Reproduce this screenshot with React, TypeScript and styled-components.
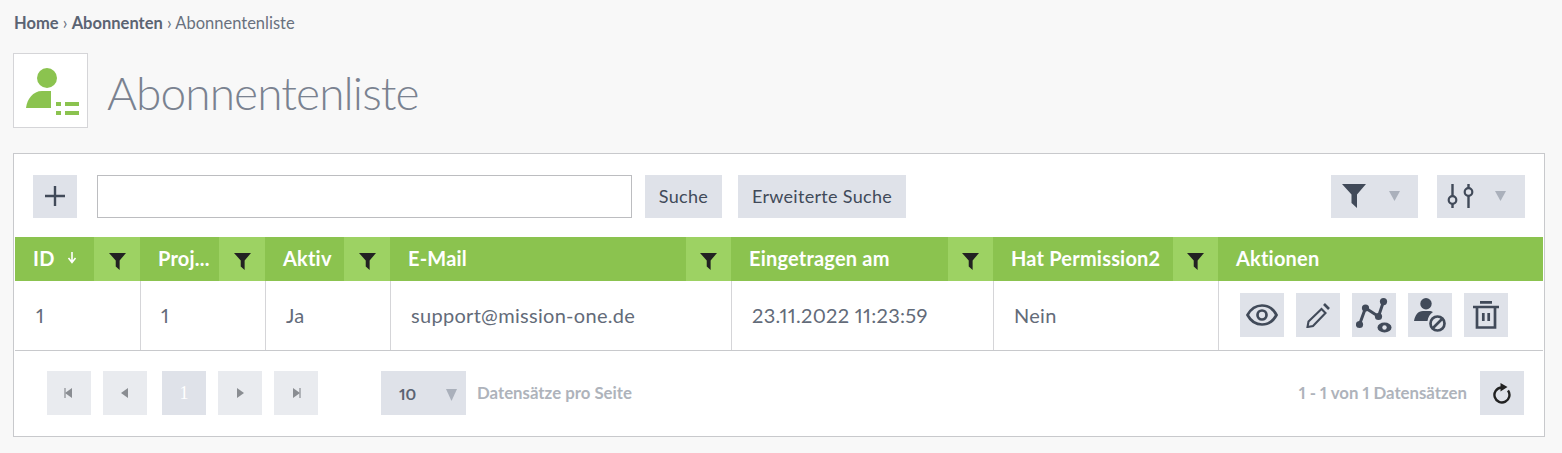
import React from 'react'
import styled, { createGlobalStyle } from 'styled-components'

const columns = [
	{ title: 'ID', head: 79, sort: true, value: '1' },
	{ title: 'Proj...', head: 79, value: '1' },
	{ title: 'Aktiv', head: 79, value: 'Ja' },
	{ title: 'E-Mail', head: 296, value: 'support@mission-one.de' },
	{ title: 'Eingetragen am', head: 217, value: '23.11.2022 11:23:59' },
	{ title: 'Hat Permission2', head: 180, value: 'Nein' },
]

const ink = '#414a59'

const FilterIcon = ({ size = 17, color = '#222' }: { size?: number; color?: string }) => (
	<svg width={size} height={size} viewBox="0 0 24 24">
		<path d="M0 0h24l-9 10.500V24l-5.500-5V10.500z" fill={color} />
	</svg>
)

const Triangle = ({ height = 10 }: { height?: number }) => (
	<svg width="11" height={height} viewBox="0 0 12 10" preserveAspectRatio="none">
		<path d="M0 0h12L6 10z" fill="#aab0bb" />
	</svg>
)

const SubscriberLogo = () => (
	<svg width="53" height="47" viewBox="0 0 53 47">
		<circle cx="21" cy="10" r="10" fill="#8bc34f" />
		<path d="M0 40c1-9 7-17 16-17h9v17z" fill="#8bc34f" />
		<path d="M30 34h5v4h-5zM39 34h14v4H39zM30 43h5v4h-5zM39 43h14v4H39z" fill="#8bc34f" />
	</svg>
)

const ActionIcon = ({ name }: { name: string }) => {
	const stroke = { fill: 'none', stroke: ink, strokeWidth: 2.7 }
	if (name === 'eye')
		return (
			<svg width="32" height="22" viewBox="0 0 32 22">
				<path d="M1.500 11C5 4.500 10 1.500 16 1.500S27 4.500 30.500 11C27 17.500 22 20.500 16 20.500S5 17.500 1.500 11z" {...stroke} />
				<circle cx="16" cy="11" r="4.500" {...stroke} />
			</svg>
		)
	if (name === 'pencil')
		return (
			<svg width="24" height="25" viewBox="0 0 24 25">
				<path d="M15.500 6l4 4L7 23l-5.500 1 1-5.500z" {...stroke} strokeWidth={2.1} />
				<path d="M18 1l5 5" {...stroke} strokeWidth={2.6} />
			</svg>
		)
	if (name === 'path')
		return (
			<svg width="36" height="35" viewBox="0 0 36 35">
				<path d="M3.500 26.500L9.500 10l13 8.500 5-15" {...stroke} strokeWidth={3} />
				<circle cx="3.500" cy="26.500" r="3.600" fill={ink} />
				<circle cx="9.500" cy="10" r="3.600" fill={ink} />
				<circle cx="22.500" cy="18.500" r="3.600" fill={ink} />
				<circle cx="27.500" cy="3.600" r="3.600" fill={ink} />
				<ellipse cx="28.500" cy="29.500" rx="7" ry="5" fill={ink} />
				<circle cx="28.500" cy="29.500" r="2.200" fill="#dfe2e9" />
			</svg>
		)
	if (name === 'block')
		return (
			<svg width="32" height="34" viewBox="0 0 32 34">
				<circle cx="12" cy="5.700" r="5.700" fill={ink} />
				<path d="M0 23c1-6 4-10 9-10h6c2 0 3 .5 4 1-3 2-5 5-5.500 9z" fill={ink} />
				<circle cx="23.500" cy="25.500" r="7" {...stroke} />
				<path d="M18.500 30.500l10-10" {...stroke} />
			</svg>
		)
	return (
		<svg width="26" height="28" viewBox="0 0 26 28">
			<path d="M0 6h26M7 1.300h12" {...stroke} />
			<path d="M4 6v20.500h18V6" {...stroke} />
			<path d="M10.300 12v8M15.700 12v8" {...stroke} />
		</svg>
	)
}

const PagerIcon = ({ flip, bar }: { flip?: boolean; bar?: boolean }) => (
	<svg width="10" height="10" viewBox="0 0 10 10" style={flip ? { transform: 'scaleX(-1)' } : undefined}>
		<path d="M2 0l7 5-7 5z" fill="#8a8d92" />
		{bar && <path d="M8.400 0h1.200v10H8.400z" fill="#8a8d92" />}
	</svg>
)

export default function App() {
	return (
		<Page>
			<GlobalStyle />
			<Breadcrumb>
				<strong>Home</strong> › <strong>Abonnenten</strong> › Abonnentenliste
			</Breadcrumb>
			<TitleRow>
				<LogoBox>
					<SubscriberLogo />
				</LogoBox>
				<Title>Abonnentenliste</Title>
			</TitleRow>
			<Panel>
				<Toolbar>
					<Button $width={44}>
						<svg width="20" height="20" viewBox="0 0 20 20">
							<path d="M10 0v20M0 10h20" stroke={ink} strokeWidth="2.400" />
						</svg>
					</Button>
					<SearchInput />
					<Button $width={77}>Suche</Button>
					<Button $width={168} $gap={16}>
						Erweiterte Suche
					</Button>
					<ToolbarRight>
						<MenuButton $width={87} $inset={11} $between={23}>
							<FilterIcon size={24} color={ink} />
							<Triangle />
						</MenuButton>
						<MenuButton $width={88} $inset={10} $between={21}>
							<svg width="27" height="24" viewBox="0 0 27 24">
								<path d="M5.500 0v12M5.500 20v4M21.500 0v4M21.500 12V24" stroke={ink} strokeWidth="2.400" />
								<circle cx="5.500" cy="16" r="3.800" fill="none" stroke={ink} strokeWidth="2.200" />
								<circle cx="21.500" cy="8" r="3.800" fill="none" stroke={ink} strokeWidth="2.200" />
							</svg>
							<Triangle />
						</MenuButton>
					</ToolbarRight>
				</Toolbar>
				<TableGrid>
					{columns.map((c) => (
						<HeadCell key={c.title}>
							<HeadLabel $width={c.head}>
								{c.title}
								{c.sort && (
									<svg width="10" height="12" viewBox="0 0 10 12">
										<path d="M5 0v9M1.500 6L5 10.500 8.500 6" fill="none" stroke="#fff" strokeWidth="1.600" />
									</svg>
								)}
							</HeadLabel>
							<FilterCell>
								<FilterIcon />
							</FilterCell>
						</HeadCell>
					))}
					<HeadCell>
						<HeadLabel>Aktionen</HeadLabel>
					</HeadCell>
					{columns.map((c, i) => (
						<BodyCell key={c.title} $first={i === 0}>
							{c.value}
						</BodyCell>
					))}
					<ActionsCell>
						{['eye', 'pencil', 'path', 'block', 'trash'].map((name) => (
							<ActionButton key={name}>
								<ActionIcon name={name} />
							</ActionButton>
						))}
					</ActionsCell>
				</TableGrid>
				<Footer>
					<Pager>
						<PageButton>
							<PagerIcon flip bar />
						</PageButton>
						<PageButton>
							<PagerIcon flip />
						</PageButton>
						<CurrentPage>1</CurrentPage>
						<PageButton>
							<PagerIcon />
						</PageButton>
						<PageButton>
							<PagerIcon bar />
						</PageButton>
					</Pager>
					<PageSize>
						10
						<PageSizeArrow>
							<Triangle height={12} />
						</PageSizeArrow>
					</PageSize>
					<FooterText>Datensätze pro Seite</FooterText>
					<FooterRight>
						<FooterText>1 - 1 von 1 Datensätzen</FooterText>
						<RefreshButton $width={44}>
							<svg width="18" height="21" viewBox="0 0 18 21">
								<path d="M8 4.500A7.500 7.500 0 1 0 15 7.500" fill="none" stroke="#222" strokeWidth="2.400" />
								<path d="M7.500 0L14.500 4 7.500 8.500z" fill="#222" />
							</svg>
						</RefreshButton>
					</FooterRight>
				</Footer>
			</Panel>
		</Page>
	)
}

const GlobalStyle = createGlobalStyle`
	html, body {
		margin: 0;
		padding: 0;
		background: #f8f8f8;
	}
	* {
		box-sizing: border-box;
	}
`

const Page = styled.div`
	width: 1562px;
	height: 453px;
	padding: 14px 17px 0 13px;
	overflow: hidden;
	font-family: Lato, 'Noto Sans', sans-serif;
	font-variant-numeric: proportional-nums;
	color: #5b6473;
`

const Breadcrumb = styled.div`
	height: 18px;
	padding-left: 1px;
	font-size: 16.5px;
	line-height: 18px;
	color: #69717e;

	strong {
		font-weight: 700;
		color: #5b6473;
	}
`

const TitleRow = styled.div`
	display: flex;
	align-items: center;
	gap: 19px;
	margin-top: 21px;
`

const LogoBox = styled.div`
	display: flex;
	align-items: center;
	justify-content: center;
	width: 75px;
	height: 75px;
	padding: 1px 0 0 4px;
	background: #fff;
	border: 1px solid #d5d5d8;
`

const Title = styled.h1`
	margin: 0;
	padding-top: 4px;
	font-size: 46px;
	font-weight: 300;
	letter-spacing: -0.9px;
	color: #7a8290;
`

const Panel = styled.div`
	width: 1532px;
	height: 284px;
	margin-top: 25px;
	background: #fff;
	border: 1px solid #c8c9cc;
`

const Toolbar = styled.div`
	display: flex;
	align-items: center;
	height: 83px;
	padding: 2px 19px 0;
`

const Button = styled.div<{ $width: number; $gap?: number }>`
	display: flex;
	align-items: center;
	justify-content: center;
	flex: none;
	width: ${(p) => p.$width}px;
	height: 43px;
	margin-left: ${(p) => p.$gap ?? 0}px;
	padding-bottom: 1px;
	background: #dfe2e9;
	font-size: 18px;
	letter-spacing: 0.3px;
	color: #414a59;
`

const RefreshButton = styled(Button)`
	height: 44px;
	padding-bottom: 0;
`

const SearchInput = styled.input`
	width: 535px;
	height: 43px;
	margin: 0 13px 0 20px;
	background: #fff;
	border: 1px solid #bcbdc0;
	outline: none;
`

const ToolbarRight = styled.div`
	display: flex;
	gap: 19px;
	margin-left: auto;
`

const MenuButton = styled(Button)<{ $inset: number; $between: number }>`
	justify-content: flex-start;
	gap: ${(p) => p.$between}px;
	padding-left: ${(p) => p.$inset}px;
`

const TableGrid = styled.div`
	display: grid;
	grid-template-columns: 125px 125px 125px 341px 262px 225px 325px;
	grid-template-rows: 44px 69px;
	margin: 0 1px;
	border-bottom: 1px solid #c8c9cc;
`

const HeadCell = styled.div`
	display: flex;
	background: #8bc34f;
	font-size: 20px;
	font-weight: 700;
	letter-spacing: 0.2px;
	color: #fff;
`

const HeadLabel = styled.div<{ $width?: number }>`
	display: flex;
	align-items: center;
	gap: 12px;
	flex: ${(p) => (p.$width ? 'none' : 1)};
	width: ${(p) => (p.$width ? `${p.$width}px` : 'auto')};
	padding: 0 0 3px 18px;
	white-space: nowrap;
`

const FilterCell = styled.div`
	display: flex;
	align-items: center;
	justify-content: center;
	flex: 1;
	padding-top: 5px;
	background: #9dd263;
`

const BodyCell = styled.div<{ $first?: boolean }>`
	display: flex;
	align-items: center;
	padding: 0 0 2px 20px;
	font-size: 20px;
	letter-spacing: 0.3px;
	color: #636b79;
	border-left: 1px solid ${(p) => (p.$first ? 'transparent' : '#d5d5d8')};
`

const ActionsCell = styled.div`
	display: flex;
	align-items: center;
	gap: 12px;
	padding: 0 0 1px 21px;
	border-left: 1px solid #d5d5d8;
`

const ActionButton = styled.div`
	display: flex;
	align-items: center;
	justify-content: center;
	width: 44px;
	height: 44px;
	background: #dfe2e9;
`

const Footer = styled.div`
	display: flex;
	align-items: center;
	height: 86px;
	padding: 0 20px 2px 33px;
`

const Pager = styled.div`
	display: flex;
	gap: 12px;
	margin-right: 63px;
`

const PageButton = styled.div`
	display: flex;
	align-items: center;
	justify-content: center;
	width: 44px;
	height: 44px;
	background: #e9ebef;
`

const CurrentPage = styled(PageButton)`
	background: #dfe2e9;
	font-family: 'Liberation Serif', serif;
	font-size: 18px;
	color: #fff;
	margin-left: 3px;
`

const PageSize = styled.div`
	display: flex;
	align-items: center;
	justify-content: space-between;
	width: 85px;
	height: 44px;
	padding: 0 9px 0 18px;
	margin-right: 11px;
	background: #dfe2e9;
	font-size: 16px;
	font-weight: 700;
	color: #5b6473;
`

const PageSizeArrow = styled.span`
	display: flex;
	margin-top: 3px;
`

const FooterText = styled.div`
	padding-bottom: 1px;
	font-size: 16.8px;
	font-weight: 700;
	color: #aeb3bb;
`

const FooterRight = styled.div`
	display: flex;
	align-items: center;
	gap: 13px;
	margin-left: auto;
`
